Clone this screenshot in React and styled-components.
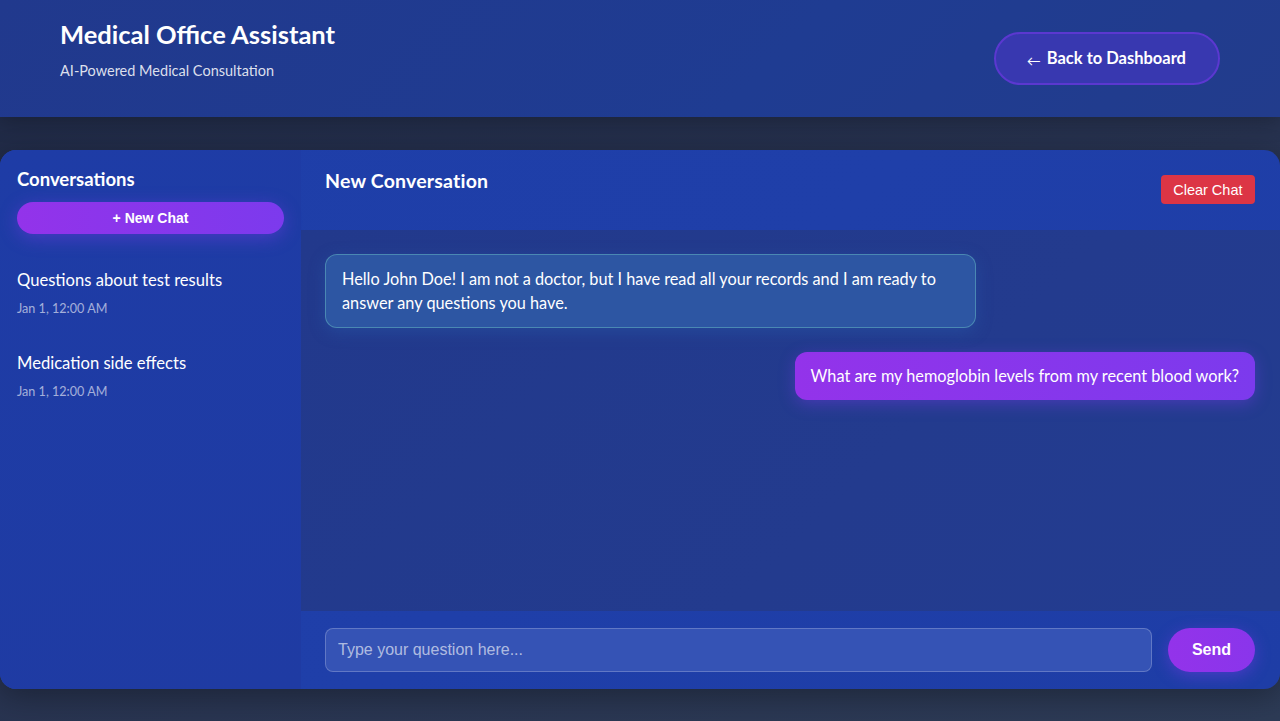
import React from "react";
import styled, { createGlobalStyle } from "styled-components";

const GlobalStyle = createGlobalStyle`
  html, body { margin: 0; padding: 0; }
  body {
    min-height: 721px;
    background: linear-gradient(160deg, #1f2945 0%, #27324f 50%, #2d3b56 100%);
    font-family: Lato, "Open Sans", sans-serif;
    color: #fff;
  }
  * { box-sizing: border-box; }
`;

const Page = styled.div`
  display: flex;
  flex-direction: column;
  min-height: 721px;
`;

const Header = styled.header`
  height: 117px;
  padding: 20px 60px;
  display: flex;
  align-items: center;
  justify-content: space-between;
  background: linear-gradient(135deg, #21398d 0%, #1f3c92 60%, #223c8c 100%);
  box-shadow: 0 4px 20px rgba(0, 0, 0, 0.25);
`;

const Brand = styled.div`
  align-self: flex-start;
  display: flex;
  flex-direction: column;
`;

const Title = styled.h1`
  margin: 0;
  font-size: 25.5px;
  line-height: 29px;
  font-weight: 700;
  color: #fff;
`;

const Subtitle = styled.p`
  margin: 11px 0 0;
  font-size: 14.5px;
  line-height: 22px;
  color: rgba(255, 255, 255, 0.85);
`;

const BackButton = styled.button`
  height: 53px;
  padding: 0 32px 0 31px;
  border-radius: 27px;
  border: 2px solid #5b38d0;
  background: #3838b0;
  color: #fff;
  font-family: inherit;
  font-size: 16.5px;
  font-weight: 700;
  display: flex;
  align-items: center;
  gap: 6px;
  cursor: pointer;
  margin-top: -1px;
`;

const Arrow = styled.span`
  font-size: 14px;
  font-weight: 400;
  position: relative;
  top: 2px;
`;

const Card = styled.main`
  margin-top: 33px;
  height: 539px;
  display: flex;
  border-radius: 16px;
  overflow: hidden;
  background: linear-gradient(135deg, #1e3ea8 0%, #1f3fa9 50%, #1e3da6 100%);
  box-shadow: 0 8px 30px rgba(0, 0, 0, 0.3);
`;

const Sidebar = styled.aside`
  width: 301px;
  flex-shrink: 0;
  display: flex;
  flex-direction: column;
  background: linear-gradient(160deg, #1e3ca6 0%, #1f3ba3 100%);
`;

const SidebarTop = styled.div`
  padding: 17px 17px 0;
`;

const SidebarTitle = styled.h2`
  margin: 0;
  font-size: 18.5px;
  line-height: 25px;
  font-weight: 700;
`;

const NewChatButton = styled.button`
  margin-top: 10px;
  width: 100%;
  height: 32px;
  border: none;
  border-radius: 16px;
  background: linear-gradient(90deg, #9333ea 0%, #7c3aed 100%);
  color: #fff;
  font-family: "Liberation Sans", Arial, sans-serif;
  font-size: 14px;
  font-weight: 700;
  box-shadow: 0 4px 18px rgba(124, 58, 237, 0.45);
  cursor: pointer;
`;

const ConvList = styled.ul`
  list-style: none;
  margin: 19px 0 0;
  padding: 0;
`;

const ConvItem = styled.li`
  padding: 16px 17px 19px;
  cursor: pointer;
`;

const ConvTitle = styled.div`
  font-size: 16.6px;
  line-height: 22px;
  color: #fff;
`;

const ConvDate = styled.div`
  margin-top: 10px;
  font-size: 12.6px;
  line-height: 16px;
  color: rgba(255, 255, 255, 0.6);
`;

const ChatPanel = styled.section`
  flex: 1;
  display: flex;
  flex-direction: column;
  min-width: 0;
`;

const ChatHeader = styled.div`
  height: 80px;
  flex-shrink: 0;
  padding: 20px 25px 20px 24px;
  display: flex;
  justify-content: space-between;
  align-items: flex-start;
`;

const ChatTitle = styled.h3`
  margin: 0;
  font-size: 19.5px;
  line-height: 22px;
  font-weight: 700;
  letter-spacing: 0.2px;
`;

const ClearButton = styled.button`
  margin-top: 5px;
  height: 29px;
  padding: 0 12.5px;
  border: none;
  border-radius: 4px;
  background: #dc3545;
  color: #fff;
  font-family: "Liberation Sans", Arial, sans-serif;
  font-size: 14.5px;
  cursor: pointer;
`;

const Messages = styled.div`
  flex: 1;
  padding: 24px 25px 24px 24px;
  display: flex;
  flex-direction: column;
  gap: 24px;
  background: linear-gradient(135deg, #22398c 0%, #233b8e 60%, #233c90 100%);
`;

const Bubble = styled.div`
  max-width: 70%;
  padding: 12px 16px;
  border-radius: 12px;
  font-size: 16.3px;
  line-height: 24px;
  color: #fff;
  align-self: ${(p) => (p.$user ? "flex-end" : "flex-start")};
  background: ${(p) =>
    p.$user
      ? "linear-gradient(90deg, #9333ea 0%, #7c3aed 100%)"
      : "#2d56a3"};
  border: ${(p) => (p.$user ? "none" : "1px solid rgba(94, 170, 190, 0.6)")};
  box-shadow: ${(p) =>
    p.$user
      ? "0 4px 16px rgba(124, 58, 237, 0.4)"
      : "0 4px 16px rgba(40, 90, 170, 0.45)"};
`;

const InputBar = styled.form`
  flex-shrink: 0;
  height: 78px;
  padding: 17px 25px 17px 24px;
  display: flex;
  gap: 16px;
`;

const TextInput = styled.input`
  flex: 1;
  height: 44px;
  padding: 0 12px;
  border-radius: 8px;
  border: 1px solid rgba(255, 255, 255, 0.22);
  background: #3553b5;
  color: #fff;
  font-family: "Liberation Sans", Arial, sans-serif;
  font-size: 16px;
  outline: none;
  &::placeholder {
    color: rgba(255, 255, 255, 0.62);
  }
`;

const SendButton = styled.button`
  height: 44px;
  padding: 0 24px;
  border: none;
  border-radius: 22px;
  background: linear-gradient(90deg, #9333ea 0%, #8a35eb 100%);
  color: #fff;
  font-family: "Liberation Sans", Arial, sans-serif;
  font-size: 16px;
  font-weight: 700;
  box-shadow: 0 4px 16px rgba(124, 58, 237, 0.45);
  cursor: pointer;
`;

const conversations = [
  { id: 1, title: "Questions about test results", date: "Jan 1, 12:00 AM" },
  { id: 2, title: "Medication side effects", date: "Jan 1, 12:00 AM" },
];

export default function App() {
  return (
    <>
      <GlobalStyle />
      <Page>
        <Header>
          <Brand>
            <Title>Medical Office Assistant</Title>
            <Subtitle>AI-Powered Medical Consultation</Subtitle>
          </Brand>
          <BackButton>
            <Arrow>←</Arrow> Back to Dashboard
          </BackButton>
        </Header>
        <Card>
          <Sidebar>
            <SidebarTop>
              <SidebarTitle>Conversations</SidebarTitle>
              <NewChatButton>+ New Chat</NewChatButton>
            </SidebarTop>
            <ConvList>
              {conversations.map((c) => (
                <ConvItem key={c.id}>
                  <ConvTitle>{c.title}</ConvTitle>
                  <ConvDate>{c.date}</ConvDate>
                </ConvItem>
              ))}
            </ConvList>
          </Sidebar>
          <ChatPanel>
            <ChatHeader>
              <ChatTitle>New Conversation</ChatTitle>
              <ClearButton>Clear Chat</ClearButton>
            </ChatHeader>
            <Messages>
              <Bubble>
                Hello John Doe! I am not a doctor, but I have read all your
                records and I am ready to answer any questions you have.
              </Bubble>
              <Bubble $user>
                What are my hemoglobin levels from my recent blood work?
              </Bubble>
            </Messages>
            <InputBar onSubmit={(e) => e.preventDefault()}>
              <TextInput placeholder="Type your question here..." />
              <SendButton type="submit">Send</SendButton>
            </InputBar>
          </ChatPanel>
        </Card>
      </Page>
    </>
  );
}
